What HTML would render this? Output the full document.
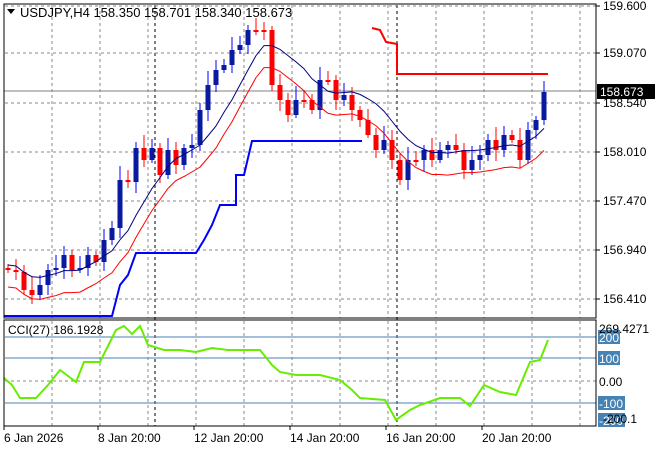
<!DOCTYPE html><html><head><style>
body{margin:0;background:#fff;font-family:"Liberation Sans",sans-serif;}
svg{display:block}
text{font-family:"Liberation Sans",sans-serif;font-size:12px;fill:#000}
</style></head><body>
<svg id="s" width="660" height="450" xmlns="http://www.w3.org/2000/svg">
<rect width="660" height="450" fill="#fff"/>
<g id="grid"></g>
<line x1="4" y1="91" x2="596" y2="91" stroke="#808080"/>
<g id="c"></g>
<polyline fill="none" stroke="#0000ff" stroke-width="2" points="4,316 112,316 120,285 128,275 136,253 196,253 204,240 212,225 220,205 236,205 236,175 244,175 252,141 362,141"/>
<polyline fill="none" stroke="#ff0000" stroke-width="2" points="372,28 380,30 386,42 397,44 397,74 548,74"/>
<polyline fill="none" stroke="#66ee00" stroke-width="2" points="4,378 12,385 20,398 36,398 48,385 60,370 76,382 84,362 100,362 116,330 124,326 132,334 140,326 148,345 164,350 180,350 196,352 212,348 228,350 260,350 272,365 280,372 296,375 320,375 340,380 352,390 360,398 385,400 396,420 410,410 420,405 440,398 460,398 470,406 484,385 500,392 516,395 530,362 540,360 548,340"/>
<rect x="4" y="4" width="592" height="314" fill="none" stroke="#000"/>
<rect x="4" y="320" width="592" height="106" fill="none" stroke="#000"/>
<g id="ax"></g>
<path d="M7 9 L15 9 L11 14 Z" fill="#000"/>
<text x="20" y="17" style="font-size:13px">USDJPY,H4  158.350 158.701 158.340 158.673</text>
<text x="8" y="334">CCI(27) 186.1928</text>
</svg>
<script>
var NS="http://www.w3.org/2000/svg";
function el(p,t,a,tx){var e=document.createElementNS(NS,t);for(var k in a)e.setAttribute(k,a[k]);if(tx)e.textContent=tx;document.getElementById(p).appendChild(e);return e;}
for(var x=52;x<596;x+=48){el("grid","line",{x1:x,y1:5,x2:x,y2:318,stroke:"#8a8a8a","stroke-dasharray":"3,3"});el("grid","line",{x1:x,y1:321,x2:x,y2:426,stroke:"#8a8a8a","stroke-dasharray":"3,3"});}
[155,397].forEach(function(x){el("grid","line",{x1:x,y1:5,x2:x,y2:426,stroke:"#000","stroke-dasharray":"3,3"});});
var lv=[[6,"159.600"],[53,"159.070"],[103,"158.540"],[152,"158.010"],[201,"157.470"],[250,"156.940"],[299,"156.410"]];
lv.forEach(function(l){el("grid","line",{x1:5,y1:l[0],x2:596,y2:l[0],stroke:"#8a8a8a","stroke-dasharray":"3,3"});el("ax","line",{x1:596,y1:l[0],x2:600,y2:l[0],stroke:"#000"});el("ax","text",{x:603,y:l[0]+4},l[1]);});
[[337,"200"],[358,"100"],[403,"-100"]].forEach(function(l){el("grid","line",{x1:5,y1:l[0],x2:596,y2:l[0],stroke:"#4a7fb0"});});
el("grid","line",{x1:5,y1:381,x2:596,y2:381,stroke:"#8a8a8a","stroke-dasharray":"3,3"});
[[337,"200",22],[358,"100",22],[403,"-100",27],[420,"-200",27]].forEach(function(l){el("ax","rect",{x:598,y:l[0]-7,width:l[2],height:14,fill:"#4682b4"});el("ax","text",{x:599,y:l[0]+5,style:"fill:#fff"},l[1]);});
el("ax","text",{x:599,y:333},"269.4271");el("ax","text",{x:599,y:386},"0.00");el("ax","text",{x:603,y:423},"-200.1");
el("ax","rect",{x:597,y:84,width:58,height:15,fill:"#000"});el("ax","text",{x:600,y:96,style:"fill:#fff"},"158.673");
[[4,"6 Jan 2026"],[98,"8 Jan 20:00"],[194,"12 Jan 20:00"],[290,"14 Jan 20:00"],[386,"16 Jan 20:00"],[482,"20 Jan 20:00"]].forEach(function(d){el("ax","line",{x1:d[0],y1:426,x2:d[0],y2:430,stroke:"#000"});el("ax","text",{x:d[0],y:442},d[1]);});
var cl=[270,272,290,295,285,270,268,255,270,268,255,262,240,228,180,182,148,160,148,175,150,165,148,145,110,85,70,65,50,45,30,30,30,85,100,115,100,100,110,80,80,100,95,110,120,135,150,140,160,180,160,160,150,160,150,145,150,170,160,155,140,150,135,140,160,130,120,92];
var prev=268,blue=[],red=[];
for(var i=0;i<cl.length;i++){var x=8+i*8,o=prev,c=cl[i];var up=c<o;var col=up?"#0a1aa0":"#ff0000";
var hi=Math.min(o,c)-4-(i*7%11),lo=Math.max(o,c)+3+(i*5%9);
el("c","line",{x1:x,y1:hi,x2:x,y2:lo,stroke:up?"#0000ff":"#ff0000"});
var h=Math.max(2,Math.abs(c-o));el("c","rect",{x:x-2.5,y:Math.min(o,c),width:5,height:h,fill:col});
prev=c;var s=0,n=0;for(var j=Math.max(0,i-7);j<=i;j++){s+=cl[j];n++;}var m=s/n;blue.push(x+","+(m-5));red.push(x+","+(m+17));}
el("c","polyline",{points:blue.join(" "),fill:"none",stroke:"#000080"});
el("c","polyline",{points:red.join(" "),fill:"none",stroke:"#ff0000"});
</script>
</body></html>
